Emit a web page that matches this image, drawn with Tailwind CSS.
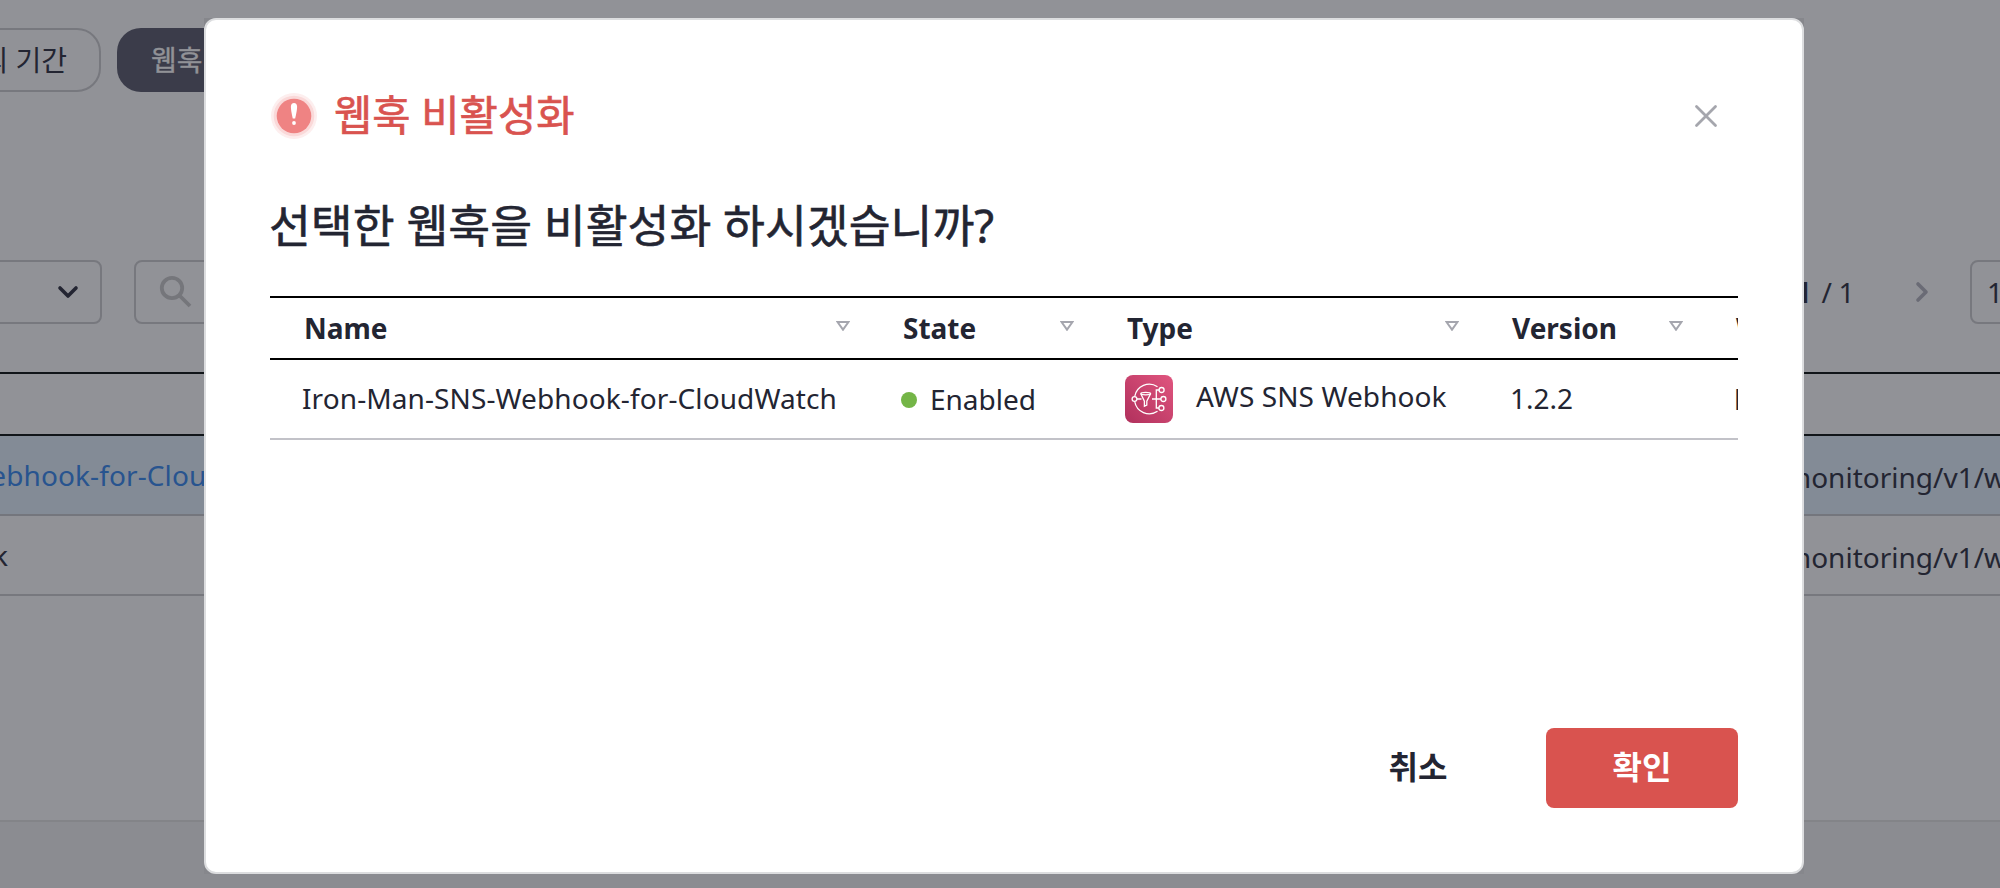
<!DOCTYPE html>
<html lang="ko">
<head>
<meta charset="utf-8">
<title>웹훅 비활성화</title>
<script src="https://cdn.jsdelivr.net/npm/@tailwindcss/browser@4"></script>
</head>
<body class="relative h-[888px] w-[2000px] overflow-hidden bg-[#919297] font-['Noto_Sans','Noto_Sans_CJK_KR',sans-serif] text-[28px] leading-[38px] text-[#232532]">
<!-- dimmed page -->
<div class="flex h-full flex-col overflow-hidden whitespace-nowrap">
  <div class="flex h-[92px] shrink-0 items-end gap-4">
    <div class="-ml-20 flex h-16 w-[181px] items-center justify-end rounded-r-[24px] border-2 border-[#77787e] pr-8 text-[28px]">임의 기간</div>
    <div class="flex h-16 w-40 items-center rounded-[24px] bg-[#3b3c4a] pl-[34px] text-[28px] text-[#919297] [-webkit-text-stroke:0.4px_#919297]">웹훅</div>
  </div>
  <div class="mt-[168px] flex h-16 shrink-0 items-center">
    <div class="-ml-4 flex h-16 w-[118px] items-center justify-end rounded-lg border-2 border-[#77787e] pr-[20px]">
      <svg class="h-6 w-6" viewBox="0 0 24 24" fill="none" stroke="#232532" stroke-width="3.6" stroke-linecap="round" stroke-linejoin="round"><path d="M4 8l8 8 8-8"/></svg>
    </div>
    <div class="ml-8 flex h-16 w-60 items-center rounded-lg border-2 border-[#77787e] pl-5">
      <svg class="h-10 w-10" viewBox="0 0 40 40" fill="none" stroke="#75767b" stroke-width="3.8"><circle cx="16" cy="16" r="10.2"/><path d="M23.5 23.500L34 34"/></svg>
    </div>
    <div class="ml-auto mr-[56px] flex items-center"><b>1</b><span class="ml-[10px] tracking-[-0.4px]">/ 1</span></div>
    <svg class="mr-9 h-6 w-6" viewBox="0 0 24 24" fill="none" stroke="#6a6b75" stroke-width="3.600" stroke-linecap="round" stroke-linejoin="round"><path d="M8 4l8 8-8 8"/></svg>
    <div class="-mr-8 flex h-16 w-[62px] items-center rounded-lg border-2 border-[#77787e] pl-[15px]">15</div>
  </div>
  <div class="mt-12 h-16 shrink-0 border-y-2 border-[#111519]"></div>
  <div class="flex h-20 shrink-0 items-center justify-between border-b-2 border-[#74767d] bg-[#838b96]">
    <span class="-ml-[229px] tracking-[0.11px] text-[#28548f]">Iron-Man-SNS-Webhook-for-CloudWatch</span>
    <span class="w-[215px] pt-1">monitoring/v1/webhook</span>
  </div>
  <div class="flex h-20 shrink-0 items-center justify-between border-b-2 border-[#77787e]">
    <span class="flex w-2 justify-end">webhook</span>
    <span class="w-[215px] pt-1">monitoring/v1/webhook</span>
  </div>
  <div class="h-[224px] shrink-0"></div>
  <div class="flex-1 border-t-2 border-[#838488] bg-[#8b8c91]"></div>
</div>

<!-- dialog -->
<div class="absolute left-[204px] top-[18px] h-[856px] w-[1600px] bg-[#86878c]">
  <div class="flex h-full flex-col rounded-[12px] border-2 border-[#dcdddf] bg-white px-16 pb-16">
    <div class="mt-[66px] flex h-[60px] shrink-0 items-center">
      <svg class="h-12 w-12" viewBox="0 0 48 48"><circle cx="24" cy="24" r="23" fill="#fdeeee"/><circle cx="24" cy="24" r="20.300" fill="#fad9d9"/><circle cx="24" cy="24" r="17.300" fill="#ef8383"/><path fill="#fff" d="M20.900 14.500c0-4.600 6.200-4.600 6.200 0 0 4-1.400 9.500-1.900 12h-2.400c-.5-2.500-1.900-8-1.900-12z"/><circle cx="24" cy="31" r="1.900" fill="#fff"/></svg>
      <h1 class="-mt-0.5 ml-4 text-[41.6px] font-normal leading-[60px] text-[#d9534f] [-webkit-text-stroke:0.7px_#d9534f]">웹훅 비활성화</h1>
      <svg class="ml-auto mr-5 h-6 w-6" viewBox="0 0 24 24" fill="none" stroke="#a5a6ad" stroke-width="2.800" stroke-linecap="round"><path d="M2.500 2.500l19 19M21.500 2.500l-19 19"/></svg>
    </div>
    <h2 class="-ml-px mt-[47px] h-[64px] shrink-0 text-[45.5px] font-normal leading-[64px] [-webkit-text-stroke:0.6px_#232532]">선택한 웹훅을 비활성화 하시겠습니까?</h2>
    <div class="mt-[39px] shrink-0 overflow-hidden whitespace-nowrap">
      <div class="w-[1700px]">
        <div class="grid h-16 grid-cols-[598px_224px_386px_224px_268px] items-center border-y-2 border-black font-bold">
          <div class="flex items-center justify-between pl-[34px] pr-[18px]">Name<svg class="mb-1 h-[10px] w-[14px]" viewBox="0 0 14 10" fill="none" stroke="#a5a6ae" stroke-width="2"><path d="M1.500 1h11L7 8.700z"/></svg></div>
          <div class="flex items-center justify-between pl-[35px] pr-[18px]">State<svg class="mb-1 h-[10px] w-[14px]" viewBox="0 0 14 10" fill="none" stroke="#a5a6ae" stroke-width="2"><path d="M1.500 1h11L7 8.700z"/></svg></div>
          <div class="flex items-center justify-between pl-[35px] pr-[19px]">Type<svg class="mb-1 h-[10px] w-[14px]" viewBox="0 0 14 10" fill="none" stroke="#a5a6ae" stroke-width="2"><path d="M1.500 1h11L7 8.700z"/></svg></div>
          <div class="flex items-center justify-between pl-[34px] pr-[19px]">Version<svg class="mb-1 h-[10px] w-[14px]" viewBox="0 0 14 10" fill="none" stroke="#a5a6ae" stroke-width="2"><path d="M1.500 1h11L7 8.700z"/></svg></div>
          <div class="pl-[34px]">Webhook URL</div>
        </div>
        <div class="grid h-20 grid-cols-[598px_224px_386px_224px_268px] items-center border-b-2 border-[#c2c2c8]">
          <div class="pb-0.5 pl-8 tracking-[0.1px]">Iron-Man-SNS-Webhook-for-CloudWatch</div>
          <div class="flex items-center pl-[33px]"><span class="mr-[13px] mt-0.5 h-4 w-4 rounded-full bg-[#74b547]"></span>Enabled</div>
          <div class="flex items-center pl-[33px]">
            <svg class="h-12 w-12" viewBox="0 0 48 48" fill="none" stroke="#fff" stroke-width="1.300">
              <defs><linearGradient id="sns" x1="0" y1="1" x2="1" y2="0"><stop offset="0" stop-color="#b0305c"/><stop offset="1" stop-color="#e0557f"/></linearGradient></defs>
              <rect width="48" height="48" rx="8" fill="url(#sns)" stroke="none"/>
              <path d="M9.700 21.500A14.800 14.800 0 0 1 32.500 11.700M9.700 26.500A14.800 14.800 0 0 0 32.500 36.300"/>
              <circle cx="9.500" cy="24" r="2.400"/><circle cx="36.600" cy="15" r="2.500"/><circle cx="38.400" cy="24" r="2.500"/><circle cx="36.400" cy="33" r="2.500"/>
              <path d="M34.100 15h-2.800v18h2.600M27 24h8.900M12 24h4.500"/>
              <ellipse cx="20.700" cy="18.600" rx="4.900" ry="1.300"/><path d="M15.800 18.800l3.600 7.400v5l2.400-1.200v-3.800l3.800-7.400"/>
            </svg>
            <span class="ml-[23px] pb-1.5 tracking-[0.08px]">AWS SNS Webhook</span>
          </div>
          <div class="pb-0.5 pl-8">1.2.2</div>
          <div class="pl-8">https://monitoring</div>
        </div>
      </div>
    </div>
    <div class="mt-auto flex h-20 shrink-0 justify-end text-[32px] font-bold">
      <button class="mr-[64px] w-[128px] pb-0.5">취소</button>
      <button class="w-48 rounded-lg bg-[#d9534f] pb-0.5 text-white">확인</button>
    </div>
  </div>
</div>
</body>
</html>
